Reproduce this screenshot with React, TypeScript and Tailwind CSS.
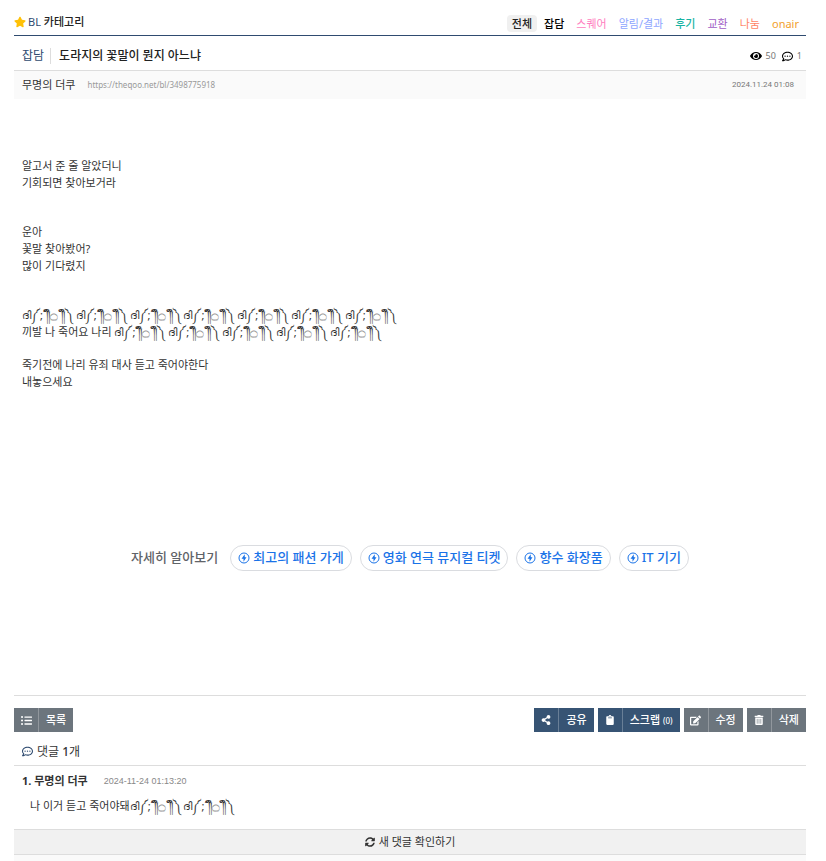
import React from "react";
import {
    FaStar,
    FaEye,
    FaRegCommentDots,
    FaListUl,
    FaShareAlt,
    FaClipboard,
    FaEdit,
    FaTrashAlt,
    FaSyncAlt,
} from "react-icons/fa";

const categories = [
    { name: "전체", style: "bg-[#f0f0f0] font-medium text-[#222]" },
    { name: "잡담", style: "font-medium text-black" },
    { name: "스퀘어", style: "text-[#ff7dc0]" },
    { name: "알림/결과", style: "text-[#8ea6ff]" },
    { name: "후기", style: "font-medium text-[#17b3a3]" },
    { name: "교환", style: "text-[#a05cc5]" },
    { name: "나눔", style: "text-[#ff8466]" },
    { name: "onair", style: "text-[#f2a02c]" },
];

const links = ["최고의 패션 가게", "영화 연극 뮤지컬 티켓", "향수 화장품", "IT 기기"];

function Cry({ count }: { count: number }) {
    return (
        <>
            {Array.from({ length: count }, (_, i) => (
                <span key={i}>
                    ദി༼;´༎ຶ<span className="font-['DejaVu_Sans'] text-[13px] leading-none">۝</span> ༎ຶ༽{" "}
                </span>
            ))}
        </>
    );
}

type ToolButtonProps = {
    icon: React.ReactNode;
    label: React.ReactNode;
    style: string;
};

function ToolButton({ icon, label, style }: ToolButtonProps) {
    return (
        <button
            type="button"
            className={`flex h-6 items-center text-[11px] font-medium text-white ${style}`}
        >
            <span className="flex h-6 w-[25px] items-center justify-center border-r border-white/25">
                {icon}
            </span>
            <span className="px-[7px]">{label}</span>
        </button>
    );
}

function BoltIcon() {
    return (
        <svg viewBox="0 0 24 24" className="size-3 shrink-0">
            <circle cx="12" cy="12" r="10" fill="none" stroke="currentColor" strokeWidth="2" />
            <path d="M13.5 4.5 7 13.5h4v6l6-9h-3.5z" fill="currentColor" />
        </svg>
    );
}

export default function App() {
    return (
        <div className="pr-5 pl-3.5 font-['Noto_Sans','Noto_Sans_CJK_KR',sans-serif] text-[11px] text-[#333]">
            <header className="flex h-9 items-end justify-between border-b border-[#2f4b70]">
                <h1 className="mb-[5px] flex items-center gap-0.5 leading-4">
                    <FaStar className="size-3 text-[#ffc107]" />
                    <a href="#" className="text-[#2f4b70]">
                        BL <span className="font-medium text-[#222]">카테고리</span>
                    </a>
                </h1>
                <nav className="mr-0.5 mb-[3px] flex gap-0.5">
                    {categories.map((c) => (
                        <a
                            key={c.name}
                            href="#"
                            className={`rounded px-[5px] leading-[17px] ${c.style}`}
                        >
                            {c.name}
                        </a>
                    ))}
                </nav>
            </header>

            <article>
                <div className="flex h-[35px] items-center justify-between border-b border-[#ddd] pt-1.5 pr-1 pl-2">
                    <div className="flex items-center text-xs">
                        <a href="#" className="border-r border-[#ddd] pr-1.5 text-[#2f4b70]">
                            잡담
                        </a>
                        <h2 className="pl-2 font-medium text-[#222]">
                            도라지의 꽃말이 뭔지 아느냐
                        </h2>
                    </div>
                    <div className="flex items-center gap-1 text-[9px] text-[#777]">
                        <FaEye className="size-3 text-black" />
                        50
                        <FaRegCommentDots className="ml-0.5 size-[11px] text-black" />
                        1
                    </div>
                </div>
                <div className="flex h-7 items-center justify-between bg-[#fafafa] pr-3 pl-2">
                    <div className="flex items-center gap-3">
                        <span>무명의 더쿠</span>
                        <a href="#" className="text-[8px] text-[#999]">
                            https://theqoo.net/bl/3498775918
                        </a>
                    </div>
                    <time className="font-['Roboto'] text-[8px] text-[#777]">2024.11.24 01:08</time>
                </div>

                <div className="px-2 pt-[58px] leading-[17px]">
                    <p>
                        알고서 준 줄 알았더니
                        <br />
                        기회되면 찾아보거라
                    </p>
                    <p className="mt-8">
                        운아
                        <br />
                        꽃말 찾아봤어?
                        <br />
                        많이 기다렸지
                    </p>
                    <p className="mt-8">
                        <Cry count={7} />
                        <br />
                        끼발 나 죽어요 나리 <Cry count={5} />
                    </p>
                    <p className="mt-4">
                        죽기전에 나리 유죄 대사 듣고 죽어야한다
                        <br />
                        내놓으세요
                    </p>
                </div>
            </article>

            <div className="mt-[155px] flex flex-wrap items-center justify-center gap-2 text-[13px] font-medium">
                <span className="mr-1 text-[#5f6368]">자세히 알아보기</span>
                {links.map((link) => (
                    <a
                        key={link}
                        href="#"
                        className="flex h-[26px] items-center gap-[3px] rounded-full border border-[#dadce0] px-[7px] text-[#1a73e8]"
                    >
                        <BoltIcon />
                        {link}
                    </a>
                ))}
            </div>

            <div className="mt-31 flex justify-between border-t border-[#ddd] pt-3">
                <ToolButton icon={<FaListUl size={11} />} label="목록" style="bg-[#6c757d]" />
                <div className="flex gap-1">
                    <ToolButton icon={<FaShareAlt size={10} />} label="공유" style="bg-[#375474]" />
                    <ToolButton
                        icon={<FaClipboard size={10} />}
                        label={<>스크랩 <span className="text-[8px]">(0)</span></>}
                        style="bg-[#375474]"
                    />
                    <ToolButton icon={<FaEdit size={11} />} label="수정" style="bg-[#6c757d]" />
                    <ToolButton icon={<FaTrashAlt size={10} />} label="삭제" style="bg-[#6c757d]" />
                </div>
            </div>

            <section>
                <h3 className="flex h-[34px] items-center gap-1 border-b border-[#ddd] pt-1.5 pl-2 text-xs">
                    <FaRegCommentDots className="size-[11px] text-[#2f4b70]" />
                    <span>
                        댓글 <span className="font-medium">1</span>개
                    </span>
                </h3>
                <div className="px-2 pt-[7px] pb-[15px]">
                    <div className="flex items-center gap-4 leading-4">
                        <span className="font-bold">1. 무명의 더쿠</span>
                        <time className="font-['Liberation_Sans'] text-[9px] text-[#888]">
                            2024-11-24 01:13:20
                        </time>
                    </div>
                    <p className="mt-2 pl-2 leading-[17px]">
                        나 이거 듣고 죽어야돼
                        <Cry count={2} />
                    </p>
                </div>
                <button
                    type="button"
                    className="flex h-[26px] w-full items-center justify-center gap-1 border-y border-[#ddd] bg-[#f1f1f1]"
                >
                    <FaSyncAlt size={10} />
                    새 댓글 확인하기
                </button>
                <div className="h-1.5 bg-[#fafafa]" />
            </section>
        </div>
    );
}
